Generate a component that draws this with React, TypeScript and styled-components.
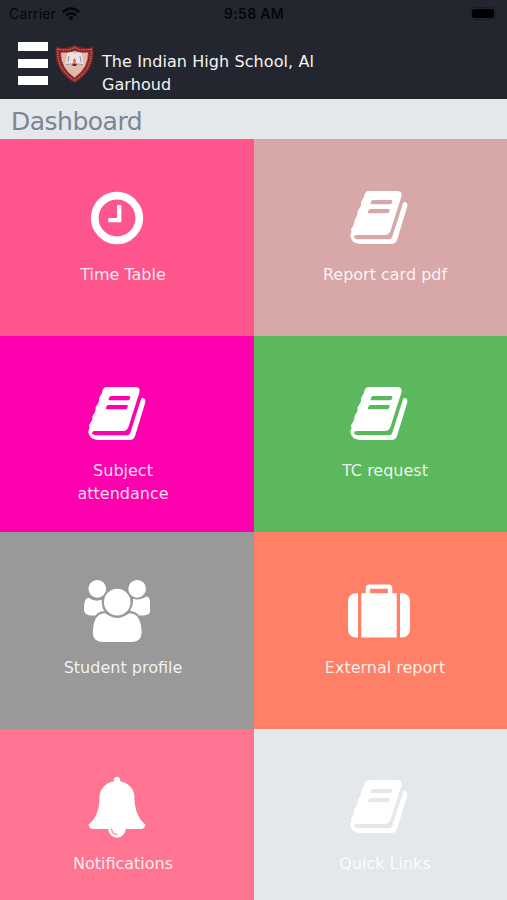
import React from "react";
import styled, { createGlobalStyle } from "styled-components";

const GlobalStyle = createGlobalStyle`
  * { box-sizing: border-box; }
  body { margin: 0; background: #e4e8eb; overflow: hidden; }
`;

const Screen = styled.main`
  width: 507px;
  height: 900px;
  overflow: hidden;
  display: flex;
  flex-direction: column;
  font-family: "DejaVu Sans", Verdana, sans-serif;
  background: #e4e8eb;
`;

const StatusBar = styled.div`
  height: 28px;
  flex: none;
  display: grid;
  grid-template-columns: 1fr auto 1fr;
  align-items: center;
  padding: 0 8px 0 9px;
  background: #23262e;
  color: #050608;
  font: 14px/28px Inter, "Liberation Sans", sans-serif;
`;

const Carrier = styled.div`
  display: flex;
  align-items: center;
  gap: 6px;
  letter-spacing: 0.15px;
`;

const Time = styled.div`
  font-weight: 600;
  font-size: 14px;
  letter-spacing: 0.3px;
`;

const Battery = styled.svg`
  justify-self: end;
  margin-top: -2px;
`;

const Header = styled.header`
  height: 70.5px;
  flex: none;
  display: flex;
  align-items: flex-start;
  background: #23262e;
  padding: 14px 18px 0;
`;

const MenuButton = styled.button`
  display: flex;
  flex-direction: column;
  gap: 8px;
  width: 30px;
  padding: 0;
  border: 0;
  background: none;
`;

const MenuBar = styled.span`
  height: 9px;
  background: #fff;
`;

const Crest = styled.svg`
  margin: 2px 0 0 7px;
  flex: none;
`;

const SchoolName = styled.h1`
  width: 240px;
  margin: 8px 0 0 8px;
  font-size: 16px;
  line-height: 23px;
  font-weight: 400;
  color: #f3f4f5;
  letter-spacing: 0.08px;
`;

const PageTitle = styled.h2`
  height: 40.5px;
  flex: none;
  margin: 0;
  padding: 3px 0 0 11px;
  font-size: 25px;
  line-height: 40px;
  font-weight: 400;
  letter-spacing: -0.5px;
  color: #7c8495;
`;

const Tiles = styled.section`
  flex: none;
  display: grid;
  grid-template-columns: 254px 253px;
  grid-auto-rows: 196.6px;
`;

const Tile = styled.a<{ $color: string; $right?: boolean }>`
  display: flex;
  flex-direction: column;
  align-items: center;
  padding: 47.5px ${(p) => (p.$right ? "0 0 9px" : "8px 0 0")};
  background: ${(p) => p.$color};
  color: #fff;
  text-decoration: none;
`;

const Glyph = styled.svg`
  height: 62px;
  margin-right: 12px;
  fill: #fff;
  flex: none;
`;

const Label = styled.span`
  width: 130px;
  margin-top: 14px;
  text-align: center;
  font-size: 16px;
  line-height: 23px;
  color: rgba(255, 255, 255, 0.88);
`;

const glyphs = {
  clock: {
    box: "-15 -15 1822 1822",
    path: "M1024 544v448q0 14-9 23t-23 9h-320q-14 0-23-9t-9-23v-64q0-14 9-23t23-9h224v-352q0-14 9-23t23-9h64q14 0 23 9t9 23zm416 352q0-148-73-273t-198-198-273-73-273 73-198 198-73 273 73 273 198 198 273 73 273-73 198-198 73-273zm224 0q0 209-103 385.500t-279.500 279.500-385.500 103-385.500-103-279.500-279.500-103-385.500 103-385.500 279.500-279.500 385.500-103 385.500 103 279.500 279.500 103 385.500z",
  },
  book: {
    box: "9 5 186 186",
    path: "M72 17H158Q173 18 169 34L136 138Q132 149 120 149H36Q27 149 27 155Q29 162 42 162H132Q139 162 142 154L174 54Q177 48 183 51Q189 55 187 63L156 165Q152 176 140 176H45Q20 175 16 153Q15 147 20 139Q16 134 19 130Q27 119 28 112Q27 106 30 102Q38 91 38 84Q36 78 40 74Q49 62 48 57Q47 51 50 47L57 34Q59 17 72 17ZM84 44Q80 44 78 49Q75 57 80 57H135Q139 57 141 52Q144 44 139 44ZM76 71Q72 71 70 76Q67 84 72 84H127Q131 84 133 79Q136 71 131 71Z",
  },
  users: {
    box: "64 0 1920 1792",
    path: "M657 896q-162 5-265 128h-134q-82 0-138-40.500t-56-118.500q0-353 124-353 6 0 43.500 21t97.500 42.500 119 21.500q67 0 133-23-5 37-5 66 0 159 93 290zm1071 637q0 120-73 189.500t-194 69.500h-874q-121 0-194-69.500t-73-189.500q0-53 3.500-103.500t14-109 26.500-108.500 43-97.500 62-81 85.500-53.500 111.500-20q10 0 43 21.500t73 48 107 48 135 21.500 135-21.500 107-48 73-48 43-21.500q61 0 111.500 20t85.500 53.500 62 81 43 97.500 26.500 108.500 14 109 3.500 103.500zm-1024-1277q0 106-75 181t-181 75-181-75-75-181 75-181 181-75 181 75 75 181zm704 384q0 159-112.500 271.500t-271.500 112.500-271.500-112.500-112.500-271.500 112.500-271.500 271.500-112.500 271.500 112.500 112.500 271.500zm576 225q0 78-56 118.500t-138 40.500h-134q-103-123-265-128 93-131 93-290 0-29-5-66 66 23 133 23 59 0 119-21.500t97.500-42.500 43.500-21q124 0 124 353zm-128-609q0 106-75 181t-181 75-181-75-75-181 75-181 181-75 181 75 75 181z",
  },
  suitcase: {
    box: "0 0 1792 1792",
    path: "M640 384h512v-128h-512v128zm-352 0v1280h-64q-92 0-158-66t-66-158v-832q0-92 66-158t158-66h64zm1120 0v1280h-1024v-1280h128v-160q0-40 28-68t68-28h576q40 0 68 28t28 68v160h128zm384 224v832q0 92-66 158t-158 66h-64v-1280h64q92 0 158 66t66 158z",
  },
  bell: {
    box: "-15 -20 1822 1822",
    path: "M912 1696q0-16-16-16-59 0-101.500-42.500t-42.500-101.500q0-16-16-16t-16 16q0 73 51.500 124.500t124.500 51.500q16 0 16-16zm816-288q0 52-38 90t-90 38h-448q0 106-75 181t-181 75-181-75-75-181h-448q-52 0-90-38t-38-90q50-42 91-88t85-119.500 74.500-158.500 50-206 19.500-260q0-152 117-282.500t307-158.500q-8-19-8-39 0-40 28-68t68-28 68 28 28 68q0 20-8 39 190 28 307 158.500t117 282.500q0 139 19.500 260t50 206 74.500 158.500 85 119.500 91 88z",
  },
};

const tiles: { label: string; color: string; icon: keyof typeof glyphs }[] = [
  { label: "Time Table", color: "#ff558d", icon: "clock" },
  { label: "Report card pdf", color: "#d8a7a7", icon: "book" },
  { label: "Subject attendance", color: "#ff00ae", icon: "book" },
  { label: "TC request", color: "#5cb85c", icon: "book" },
  { label: "Student profile", color: "#999999", icon: "users" },
  { label: "External report", color: "#ff8066", icon: "suitcase" },
  { label: "Notifications", color: "#ff7591", icon: "bell" },
  { label: "Quick Links", color: "#e4e8eb", icon: "book" },
];

export default function App() {
  return (
    <Screen>
      <GlobalStyle />
      <StatusBar>
        <Carrier>
          Carrier
          <svg width="18" height="14" viewBox="0 0 18 14" fill="none" stroke="#050608" strokeWidth="2.6">
            <path d="M1 5.200Q9-2.200 17 5.200M4 8.400Q9 3.800 14 8.400" />
            <path d="M6.300 10.300Q9 8 11.700 10.300L9 13.400Z" fill="#050608" stroke="none" />
          </svg>
        </Carrier>
        <Time>9:58 AM</Time>
        <Battery width="29" height="13" viewBox="0 0 29 13">
          <rect x=".5" y=".5" width="25" height="12" rx="4" fill="none" stroke="#1b1d24" />
          <rect x="2" y="2" width="22" height="9" rx="2.500" fill="#000" />
          <path d="M27 4.500q1.500 2 0 4" fill="#181a20" />
        </Battery>
      </StatusBar>
      <Header>
        <MenuButton aria-label="Menu">
          <MenuBar />
          <MenuBar />
          <MenuBar />
        </MenuButton>
        <Crest width="39" height="40" viewBox="0 0 39 40">
          <path d="M1 3Q11 6 19.500 1Q28 6 38 3Q41 26 19.500 39Q-2 26 1 3Z" fill="#8a2426" />
          <path d="M3 5Q12 7.500 19.500 3.500Q27 7.500 36 5Q38 25 19.500 36.500Q1 25 3 5Z" fill="none" stroke="#b98379" strokeWidth="1.200" strokeDasharray="1.300 1.100" />
          <path d="M5.500 8Q14 9 19.500 6.500Q25 9 33.500 8Q34 24 19.500 34Q5 24 5.500 8Z" fill="#e2bba8" stroke="#8a2426" strokeWidth=".8" />
          <path d="M12.500 9Q16 8 19.500 9.500Q23 8 26.500 9L29 21Q23 19.500 19.500 22Q16 19.500 10 21Z" fill="#e6e4ea" />
          <path d="M14 12l-1 6M25 12l1 6M11 20.500Q16 19 19.500 21.500Q23 19 28 20.500" fill="none" stroke="#9c8b9b" />
          <path d="M17 19.500h5L21 22h-3Z" fill="#702620" />
          <path d="M19.500 14Q22.500 17 19.500 20Q16.500 17 19.500 14Z" fill="#ed6b32" />
        </Crest>
        <SchoolName>The Indian High School, Al Garhoud</SchoolName>
      </Header>
      <PageTitle>Dashboard</PageTitle>
      <Tiles>
        {tiles.map((t, i) => (
          <Tile key={t.label} $color={t.color} $right={i % 2 === 1}>
            <Glyph viewBox={glyphs[t.icon].box}>
              <path fillRule={t.icon === "book" ? "evenodd" : "nonzero"} d={glyphs[t.icon].path} />
            </Glyph>
            <Label>{t.label}</Label>
          </Tile>
        ))}
      </Tiles>
    </Screen>
  );
}
